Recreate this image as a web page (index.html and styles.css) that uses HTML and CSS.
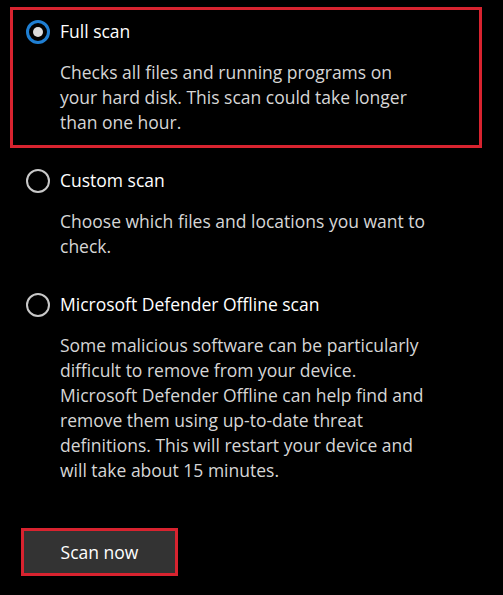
FILE: index.html
```html
<!DOCTYPE html>
<html lang="en">
<head>
  <meta charset="UTF-8">
  <title>Scan options</title>
  <link rel="stylesheet" href="styles.css">
</head>
<body>
  <div id="scan">
    <div class="option selected">
      <div class="title"><span class="radio checked"></span>Full scan</div>
      <p class="desc">Checks all files and running programs on<br>your hard disk. This scan could take longer<br>than one hour.</p>
    </div>
    <div class="option">
      <div class="title"><span class="radio"></span>Custom scan</div>
      <p class="desc">Choose which files and locations you want to<br>check.</p>
    </div>
    <div class="option">
      <div class="title"><span class="radio"></span>Microsoft Defender Offline scan</div>
      <p class="desc">Some malicious software can be particularly<br>difficult to remove from your device.<br>Microsoft Defender Offline can help find and<br>remove them using up-to-date threat<br>definitions. This will restart your device and<br>will take about 15 minutes.</p>
    </div>
    <button class="btn">Scan now</button>
  </div>
</body>
</html>
```

FILE: styles.css
```css
* { margin: 0; padding: 0; box-sizing: border-box; }
body {
  background-color: #000;
  font-family: "Open Sans", "Noto Sans", sans-serif;
  font-size: 17.5px;
  color: #fff;
}
#scan {
  padding: 7px 21px 0 10px;
  display: flex;
  flex-direction: column;
  gap: 8px;
}
.option {
  width: 472px;
  border: 3px solid transparent;
  padding: 9px 13px 10px;
}
.option.selected {
  border-color: #d8232f;
}
.title {
  display: flex;
  align-items: center;
  gap: 10px;
  height: 25px;
  line-height: 25px;
  color: #fff;
}
.radio {
  width: 24px;
  height: 24px;
  border: 2px solid #c8c8c8;
  border-radius: 50%;
  display: flex;
  align-items: center;
  justify-content: center;
}
.radio.checked {
  border: 3px solid #1f7fd3;
}
.radio.checked::after {
  content: "";
  width: 10px;
  height: 10px;
  border-radius: 50%;
  background: #dcdcdc;
}
.desc {
  margin: 16px 0 0 34px;
  line-height: 25px;
  color: #d6d6d6;
  white-space: nowrap;
}
.btn {
  margin: 24px 0 0 11px;
  width: 157px;
  height: 48px;
  background: #333;
  border: 3px solid #d8232f;
  color: #fff;
  font-family: inherit;
  font-size: 17.5px;
}
```
